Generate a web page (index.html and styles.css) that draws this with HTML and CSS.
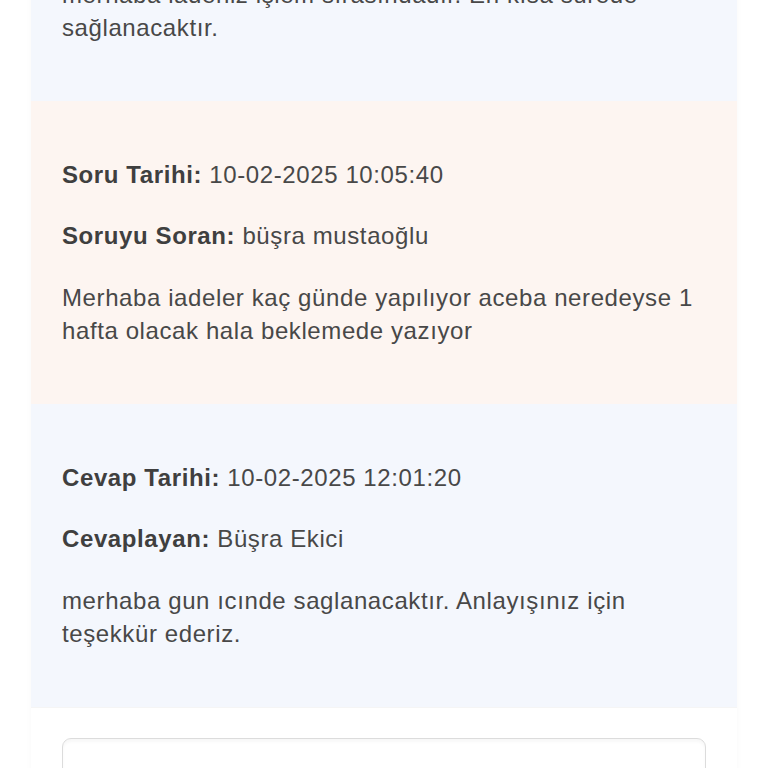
FILE: index.html
```html
<!DOCTYPE html>
<html lang="tr">
<head>
<meta charset="utf-8">
<title>Soru Cevap</title>
<link rel="stylesheet" href="styles.css">
</head>
<body>
<div class="thread">
  <section class="msg msg-answer">
    <p><b>Cevap Tarihi:</b> 09-02-2025 18:20:11</p>
    <p><b>Cevaplayan:</b> Büşra Ekici</p>
    <p>merhaba iadeniz işlem sırasındadır. En kısa sürede sağlanacaktır.</p>
  </section>
  <section class="msg msg-question">
    <p><b>Soru Tarihi:</b> 10-02-2025 10:05:40</p>
    <p><b>Soruyu Soran:</b> büşra mustaoğlu</p>
    <p>Merhaba iadeler kaç günde yapılıyor aceba neredeyse 1 hafta olacak hala beklemede yazıyor</p>
  </section>
  <section class="msg msg-answer">
    <p><b>Cevap Tarihi:</b> 10-02-2025 12:01:20</p>
    <p><b>Cevaplayan:</b> Büşra Ekici</p>
    <p>merhaba gun ıcınde saglanacaktır. Anlayışınız için teşekkür ederiz.</p>
  </section>
  <section class="reply">
    <div class="reply-box"></div>
  </section>
</div>
</body>
</html>
```

FILE: styles.css
```css
html, body {
  margin: 0;
  padding: 0;
  background: #ffffff;
}
body {
  font-family: "Liberation Sans", Arial, Helvetica, sans-serif;
  color: #484848;
  overflow: hidden;
}
.thread {
  width: 706px;
  margin: -202.5px auto 0;
  background: #ffffff;
  box-shadow: 0 0 6px rgba(0, 0, 0, 0.035);
}
.msg {
  display: flex;
  flex-direction: column;
  gap: 28.5px;
  padding: 57px 31px;
}
.msg p {
  margin: 0;
  font-size: 24px;
  line-height: 33px;
  letter-spacing: 0.6px;
}
.msg b {
  font-weight: bold;
  color: #3f3f3f;
}
.msg-answer {
  background: #f4f7fd;
}
.msg-question {
  background: #fdf5f1;
}
.reply {
  padding: 30px 31px 40px;
  border-top: 1px solid #f5f5f5;
}
.reply-box {
  height: 140px;
  border: 1.5px solid #dcdcdc;
  border-radius: 9px;
  box-shadow: inset 0 3px 3px rgba(0, 0, 0, 0.03);
  background: #ffffff;
}
```
